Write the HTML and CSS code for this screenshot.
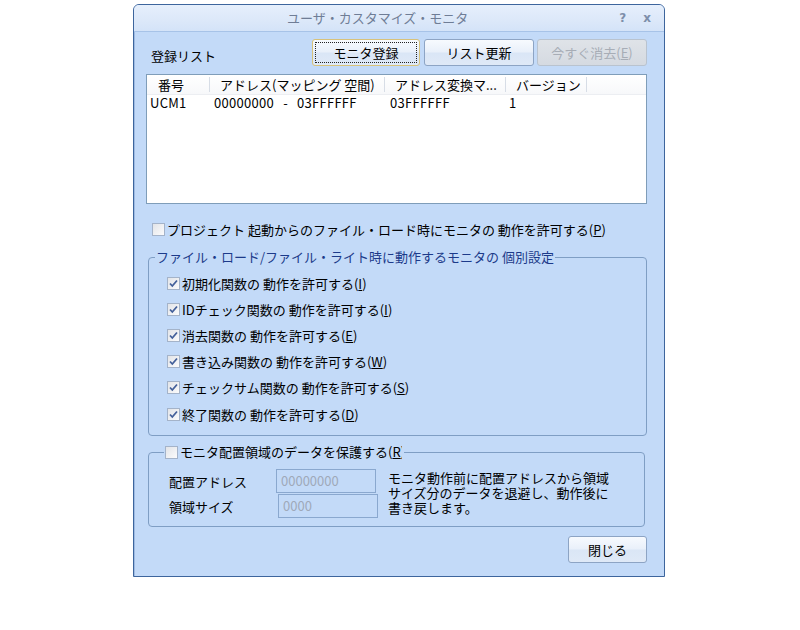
FILE: index.html
```html
<!DOCTYPE html>
<html lang="ja">
<head>
<meta charset="utf-8">
<title>ユーザ・カスタマイズ・モニタ</title>
<link rel="stylesheet" href="styles.css">
</head>
<body>
<div class="dialog">
  <div class="titlebar">
    <div class="title">ユーザ・カスタマイズ・モニタ</div>
    <div class="tbtns"><span class="tb">?</span><span class="tb">x</span></div>
  </div>
  <div class="content">
    <div class="toolbar">
      <span class="label reg">登録リスト</span>
      <div class="btns">
        <button class="btn default w108"><span class="focus">モニタ登録</span></button>
        <button class="btn w110">リスト更新</button>
        <button class="btn disabled w110">今すぐ消去(<u>E</u>)</button>
      </div>
    </div>

    <div class="listbox">
      <div class="lhead">
        <div class="c c1">番号</div>
        <div class="c c2">アドレス(マッピング 空間)</div>
        <div class="c c3">アドレス変換マ...</div>
        <div class="c c4">バージョン</div>
      </div>
      <div class="lrow">
        <div class="r c1">UCM1</div>
        <div class="r c2">00000000<span class="dash">-</span>03FFFFFF</div>
        <div class="r c3">03FFFFFF</div>
        <div class="r c4">1</div>
      </div>
    </div>

    <div class="chk top">
      <span class="box"></span>
      <span>プロジェクト 起動からのファイル・ロード時にモニタの 動作を許可する(<u>P</u>)</span>
    </div>

    <fieldset class="group g1">
      <legend class="legend1">ファイル・ロード/ファイル・ライト時に動作するモニタの 個別設定</legend>
      <div class="gbody1">
        <div class="chk item"><span class="box on"><svg viewBox="0 0 11 11" width="11" height="11"><path d="M2 5.5 L4.3 8 L9 2.5" fill="none" stroke="#44609a" stroke-width="1.8"/></svg></span><span>初期化関数の 動作を許可する(<u>I</u>)</span></div>
        <div class="chk item"><span class="box on"><svg viewBox="0 0 11 11" width="11" height="11"><path d="M2 5.5 L4.3 8 L9 2.5" fill="none" stroke="#44609a" stroke-width="1.8"/></svg></span><span>IDチェック関数の 動作を許可する(<u>I</u>)</span></div>
        <div class="chk item"><span class="box on"><svg viewBox="0 0 11 11" width="11" height="11"><path d="M2 5.5 L4.3 8 L9 2.5" fill="none" stroke="#44609a" stroke-width="1.8"/></svg></span><span>消去関数の 動作を許可する(<u>E</u>)</span></div>
        <div class="chk item"><span class="box on"><svg viewBox="0 0 11 11" width="11" height="11"><path d="M2 5.5 L4.3 8 L9 2.5" fill="none" stroke="#44609a" stroke-width="1.8"/></svg></span><span>書き込み関数の 動作を許可する(<u>W</u>)</span></div>
        <div class="chk item"><span class="box on"><svg viewBox="0 0 11 11" width="11" height="11"><path d="M2 5.5 L4.3 8 L9 2.5" fill="none" stroke="#44609a" stroke-width="1.8"/></svg></span><span>チェックサム関数の 動作を許可する(<u>S</u>)</span></div>
        <div class="chk item"><span class="box on"><svg viewBox="0 0 11 11" width="11" height="11"><path d="M2 5.5 L4.3 8 L9 2.5" fill="none" stroke="#44609a" stroke-width="1.8"/></svg></span><span>終了関数の 動作を許可する(<u>D</u>)</span></div>
      </div>
    </fieldset>

    <fieldset class="group g2">
      <legend class="legend2"><span class="box"></span><span class="clip">モニタ配置領域のデータを保護する(<u>R</u>)</span></legend>
      <div class="protect">
        <div class="fields">
          <div class="frow"><span class="flabel">配置アドレス</span><span class="input">00000000</span></div>
          <div class="frow"><span class="flabel">領域サイズ</span><span class="input i2">0000</span></div>
        </div>
        <div class="desc">
          <div class="dl">モニタ動作前に配置アドレスから領域</div>
          <div class="dl">サイズ分のデータを退避し、動作後に</div>
          <div class="dl">書き戻します。</div>
        </div>
      </div>
    </fieldset>

    <div class="footer">
      <button class="btn close">閉じる</button>
    </div>
  </div>
</div>
</body>
</html>
```

FILE: styles.css
```css
html, body {
  margin: 0;
  padding: 0;
  background: #ffffff;
}
body {
  padding: 4px 0 0 133px;
  font-family: "Noto Sans CJK JP", "Noto Sans", sans-serif;
  font-size: 13px;
  color: #000;
}
.dialog {
  width: 530px;
  height: 571px;
  border: 1px solid #3d659d;
  border-radius: 6px 6px 0 0;
  background: #c3daf8;
  display: flex;
  flex-direction: column;
  overflow: hidden;
}
.titlebar {
  height: 26px;
  border-bottom: 1px solid #a7c3e8;
  background: linear-gradient(#e6effc, #dce8f9 60%, #d4e3f8);
  display: flex;
  align-items: center;
}
.title {
  flex: 1;
  text-align: center;
  color: #6f7d96;
  font-size: 13px;
  line-height: 26px;
  padding-left: 2px;
}
.tbtns {
  display: flex;
  gap: 17px;
  padding-right: 13px;
  color: #7d8eaa;
  font-family: "DejaVu Sans", sans-serif;
  font-weight: bold;
  font-size: 12px;
}
.content {
  flex: 1;
  display: flex;
  flex-direction: column;
  padding: 0 17px 0 11px;
  border-left: 1px solid #9fbbe2;
}
.toolbar {
  display: flex;
  justify-content: space-between;
  margin-top: 7px;
  height: 27px;
}
.label.reg {
  align-self: flex-end;
  margin-left: 5px;
  line-height: 18px;
  margin-bottom: 1px;
}
.btns {
  display: flex;
  gap: 3px;
}
.btn {
  height: 27px;
  font-family: inherit;
  font-size: 13px;
  color: #000;
  border: 1px solid #8da4c4;
  border-radius: 3px;
  background: linear-gradient(#f7fafe 0%, #e9f0fa 48%, #dae6f6 52%, #dfe9f7 100%);
  padding: 0;
  line-height: 18px;
}
.w108 { width: 108px; margin-right: 1px; }
.w110 { width: 110px; }
.btn.default {
  border-color: #d8c27a;
  padding: 2px;
}
.focus {
  display: block;
  height: 100%;
  border: 1px dotted #222;
  box-sizing: border-box;
  line-height: 19px;
}
.btn.disabled {
  color: #a7adb6;
  border-color: #b9c3cf;
  background: linear-gradient(#dfe3e8, #d5dae1);
}
.listbox {
  margin-top: 8px;
  height: 128px;
  border: 1px solid #7f9db9;
  background: #fff;
}
.lhead {
  display: flex;
  height: 19px;
  border-bottom: 1px solid #eceef2;
  background: linear-gradient(#ffffff, #f7f8fa);
  align-items: center;
}
.lhead .c {
  box-sizing: border-box;
  padding-left: 10px;
  line-height: 15px;
  border-right: 1px solid #d7dde6;
  white-space: nowrap;
}
.c1 { width: 63px; }
.c2 { width: 175px; }
.c3 { width: 121px; }
.c4 { width: 81px; }
.lhead .c1 { padding-left: 11px; }
.lrow {
  display: flex;
  height: 16px;
  align-items: center;
}
.lrow .r {
  box-sizing: border-box;
  padding-left: 4px;
  white-space: nowrap;
  line-height: 16px;
}
.lrow .c1 { padding-left: 3px; letter-spacing: 0.3px; }
.lrow .c2 { letter-spacing: 0.3px; }
.lrow .c3 { padding-left: 5px; letter-spacing: 0.3px; }
.lrow .c4 { padding-left: 3px; }
.dash { margin: 0 9px; }

.chk {
  display: flex;
  align-items: center;
  gap: 2px;
  white-space: nowrap;
}
.chk.top {
  margin-top: 16px;
  height: 18px;
  margin-left: 6px;
}
.box {
  width: 11px;
  height: 11px;
  border: 1px solid #a4b3c9;
  background: linear-gradient(135deg, #e2e4e8, #fbfbfc);
  display: inline-flex;
  align-items: center;
  justify-content: center;
  flex: none;
}
.box svg { display: block; }
.group {
  margin: 10px 0 0 2px;
  padding: 0;
  border: 1px solid #7f9ec4;
  border-radius: 4px;
  min-width: 0;
}
.gbody1 {
  padding: 4px 0 8px 18px;
}
.legend1 {
  margin-left: 6px;
  padding: 0 1px;
  color: #1c3a8a;
  line-height: 18px;
}
.item {
  height: 26.2px;
}
.g2 {
  margin: 7px 2px 0 2px;
}
.legend2 {
  margin-left: 15px;
  padding: 0 2px 0 1px;
  line-height: 18px;
  display: flex;
  align-items: center;
  gap: 2px;
}
.clip {
  display: inline-block;
  width: 222px;
  overflow: hidden;
  white-space: nowrap;
}
.protect {
  display: flex;
  gap: 10px;
  padding: 8px 0 8px 20px;
}
.fields {
  display: flex;
  flex-direction: column;
  gap: 1px;
}
.frow {
  display: flex;
  align-items: center;
  height: 24px;
}
.flabel {
  width: 107px;
}
.input {
  box-sizing: border-box;
  width: 100px;
  height: 24px;
  border: 1px solid #8aa8cf;
  color: #9fa9b9;
  padding-left: 4px;
  line-height: 22px;
}
.input.i2 { margin-left: 2px; }
.desc {
  margin-top: 1px;
}
.dl {
  height: 15px;
  line-height: 15px;
  white-space: nowrap;
}
.footer {
  display: flex;
  justify-content: flex-end;
  margin-top: 9px;
}
.btn.close {
  width: 79px;
}
```
